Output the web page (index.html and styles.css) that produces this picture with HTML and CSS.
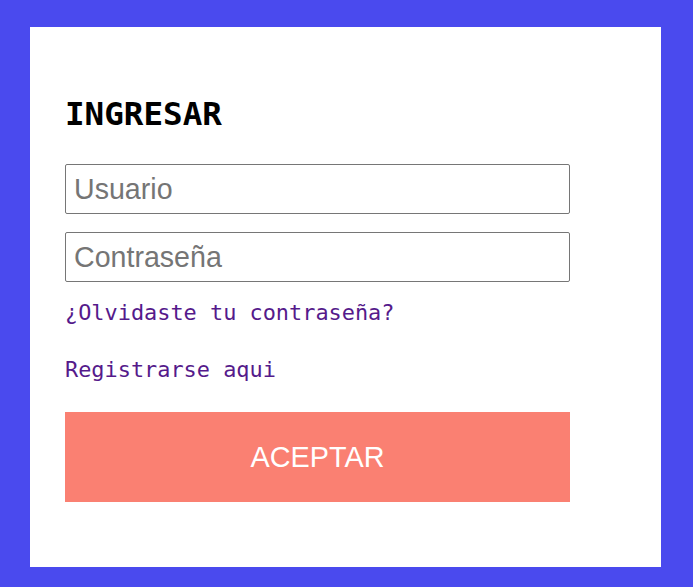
FILE: index.html
```html
<!DOCTYPE html>
<html lang="es">
<head>
<meta charset="utf-8">
<title>Ingresar</title>
<link rel="stylesheet" href="styles.css">
</head>
<body>
<main class="card">
  <h1 class="title">INGRESAR</h1>
  <form class="form">
    <input class="field" type="text" placeholder="Usuario">
    <input class="field" type="password" placeholder="Contraseña">
    <a class="link link-forgot" href="#">¿Olvidaste tu contraseña?</a>
    <a class="link link-register" href="#">Registrarse aqui</a>
    <button class="submit" type="button">ACEPTAR</button>
  </form>
</main>
</body>
</html>
```
FILE: styles.css
```css
html, body {
  margin: 0;
  padding: 0;
}
body {
  background: #4a4aee;
  min-height: 587px;
  box-sizing: border-box;
  padding: 27px 0 20px 30px;
}
.card {
  width: 631px;
  height: 540px;
  box-sizing: border-box;
  background: #ffffff;
  padding: 71px 0 0 35px;
}
.title {
  margin: 0;
  font-family: "DejaVu Sans Mono", monospace;
  font-weight: bold;
  font-size: 32.6px;
  line-height: 32px;
  color: #000;
}
.form {
  display: flex;
  flex-direction: column;
  align-items: flex-start;
  margin-top: 34px;
}
.field {
  width: 505px;
  height: 50px;
  box-sizing: border-box;
  border: 1px solid #767676;
  border-radius: 2px;
  padding: 0 8px;
  margin: 0 0 18px 0;
  font-family: "Liberation Sans", Arial, sans-serif;
  font-size: 28.6px;
  color: #000;
  background: #fff;
}
.field::placeholder {
  color: #757575;
}
.link {
  font-family: "DejaVu Sans Mono", monospace;
  font-size: 21.9px;
  line-height: 26px;
  color: #551a8b;
  text-decoration: none;
}
.link-register {
  margin-top: 31px;
}
.submit {
  margin-top: 29px;
  width: 505px;
  height: 90px;
  border: none;
  background: #fa8072;
  color: #fff;
  font-family: "Liberation Sans", Arial, sans-serif;
  font-size: 28.8px;
  cursor: pointer;
}
```
